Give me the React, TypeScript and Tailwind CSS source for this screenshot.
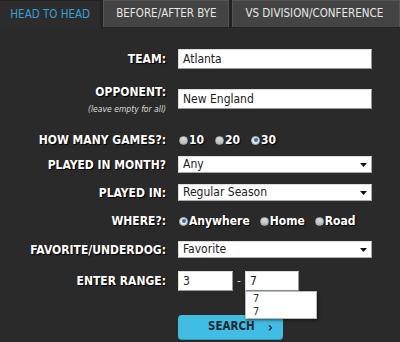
import React from "react";

const tahoma = "[font-family:'DejaVu_Sans_Condensed','DejaVu_Sans',Tahoma,sans-serif] [font-stretch:condensed]";
const labelCls = `text-right text-white font-bold text-[12px] leading-[16px] ${tahoma} [text-shadow:1px_1px_1px_#000]`;
const fieldFont = `${tahoma} text-[12px] text-[#222]`;

function Radio({ checked, label }: { checked?: boolean; label: string }) {
  return (
    <span className="flex items-center">
      {checked ? (
        <span className="w-[9px] h-[9px] rounded-full bg-[#e8e8e8] border border-[#9aa] flex items-center justify-center">
          <span className="w-[4px] h-[4px] rounded-full bg-[#2f6fb0]" />
        </span>
      ) : (
        <span className="w-[9px] h-[9px] rounded-full bg-[linear-gradient(#e0e0e0,#b8b8b8)] border border-[#aaa]" />
      )}
      <span className={`ml-[1px] text-white font-bold text-[12px] leading-[16px] ${tahoma} [text-shadow:1px_1px_1px_#000]`}>
        {label}
      </span>
    </span>
  );
}

function Select({ value }: { value: string }) {
  return (
    <div
      className={`w-[194px] h-[17px] bg-white border border-[#aaa] border-t-[#ddd] border-l-[#ddd] flex items-center justify-between pl-[4px] pr-[4px] ${fieldFont}`}
    >
      <span className="leading-[15px]">{value}</span>
      <svg width="7" height="4" viewBox="0 0 7 4">
        <path d="M0 0 L7 0 L3.5 4 Z" fill="#111" />
      </svg>
    </div>
  );
}

function TextInput({ value, w }: { value: string; w: string }) {
  return (
    <div
      className={`${w} h-[20px] bg-white border border-[#999] border-t-[#ddd] border-l-[#ddd] flex items-center pl-[4px] ${fieldFont}`}
    >
      {value}
    </div>
  );
}

export default function App() {
  return (
    <div className="w-[400px] h-[342px] bg-[#2a2a2a] overflow-hidden relative">
      {/* Tabs */}
      <div className={`flex h-[28px] bg-[#222] ${tahoma} text-[11.5px]`}>
        <div className="w-[102px] mt-[1px] h-[27px] bg-[#2c2c2c] flex items-center justify-center text-[#3a9fd3]">
          HEAD TO HEAD
        </div>
        <div className="ml-[3px] w-[128px] h-[27px] bg-[#444] border border-[#555] border-b-0 flex items-center justify-center text-[#e6e6e6]">
          BEFORE/AFTER BYE
        </div>
        <div className="ml-[3px] w-[170px] h-[27px] bg-[#444] border border-[#555] border-b-0 flex items-center pl-[12px] text-[#e6e6e6] whitespace-nowrap">
          VS DIVISION/CONFERENCE
        </div>
      </div>

      {/* Form */}
      <div className="flex flex-col">
        <div className="mt-[21px] grid grid-cols-[166px_1fr] gap-x-[12px] items-center">
          <div className={labelCls}>TEAM:</div>
          <TextInput value="Atlanta" w="w-[194px]" />
        </div>

        <div className="mt-[15px] grid grid-cols-[166px_1fr] gap-x-[12px] items-start">
          <div className="flex flex-col items-end">
            <div className={labelCls}>OPPONENT:</div>
            <div className={`mt-[2px] text-[#ddd] italic text-[8.5px] leading-[14px] ${tahoma}`}>
              (leave empty for all)
            </div>
          </div>
          <div className="mt-[5px]">
            <TextInput value="New England" w="w-[194px]" />
          </div>
        </div>

        <div className="mt-[16px] grid grid-cols-[166px_1fr] gap-x-[12px] items-center h-[16px]">
          <div className={labelCls}>HOW MANY GAMES?:</div>
          <div className="flex items-center gap-[11px] ml-[1px]">
            <Radio label="10" />
            <Radio label="20" />
            <Radio checked label="30" />
          </div>
        </div>

        <div className="mt-[8px] grid grid-cols-[166px_1fr] gap-x-[12px] items-center">
          <div className={labelCls}>PLAYED IN MONTH?</div>
          <Select value="Any" />
        </div>

        <div className="mt-[11px] grid grid-cols-[166px_1fr] gap-x-[12px] items-center">
          <div className={labelCls}>PLAYED IN:</div>
          <Select value="Regular Season" />
        </div>

        <div className="mt-[12px] grid grid-cols-[166px_1fr] gap-x-[12px] items-center h-[16px]">
          <div className={labelCls}>WHERE?:</div>
          <div className="flex items-center gap-[10px] ml-[1px]">
            <Radio checked label="Anywhere" />
            <Radio label="Home" />
            <Radio label="Road" />
          </div>
        </div>

        <div className="mt-[12px] grid grid-cols-[166px_1fr] gap-x-[12px] items-center">
          <div className={labelCls}>FAVORITE/UNDERDOG:</div>
          <Select value="Favorite" />
        </div>

        <div className="mt-[13px] grid grid-cols-[166px_1fr] gap-x-[12px] items-center">
          <div className={labelCls}>ENTER RANGE:</div>
          <div className="flex items-center">
            <TextInput value="3" w="w-[55px]" />
            <span className={`mx-[4px] text-[#ccc] text-[12px] ${tahoma}`}>-</span>
            <div className="relative">
              <TextInput value="7" w="w-[54px]" />
              <div className={`absolute left-0 top-[20px] w-[72px] bg-white border border-[#bbb] shadow-[1px_1px_3px_rgba(0,0,0,0.6)] z-10 ${tahoma} text-[11px] text-[#333] leading-[13px]`}>
                <div className="pl-[7px]">7</div>
                <div className="pl-[7px]">7</div>
              </div>
            </div>
          </div>
        </div>

        <div className="mt-[24px] grid grid-cols-[166px_1fr] gap-x-[12px]">
          <div />
          <div className={`w-[105px] h-[25px] rounded-[4px] bg-[#40bde2] border-b border-[#2a9cc0] flex items-center ${tahoma} font-bold text-[11.5px] text-[#1c2a36]`}>
            <span className="ml-[30px]">SEARCH</span>
            <span className="ml-auto mr-[10px] text-[14px] leading-none">›</span>
          </div>
        </div>
      </div>
    </div>
  );
}
